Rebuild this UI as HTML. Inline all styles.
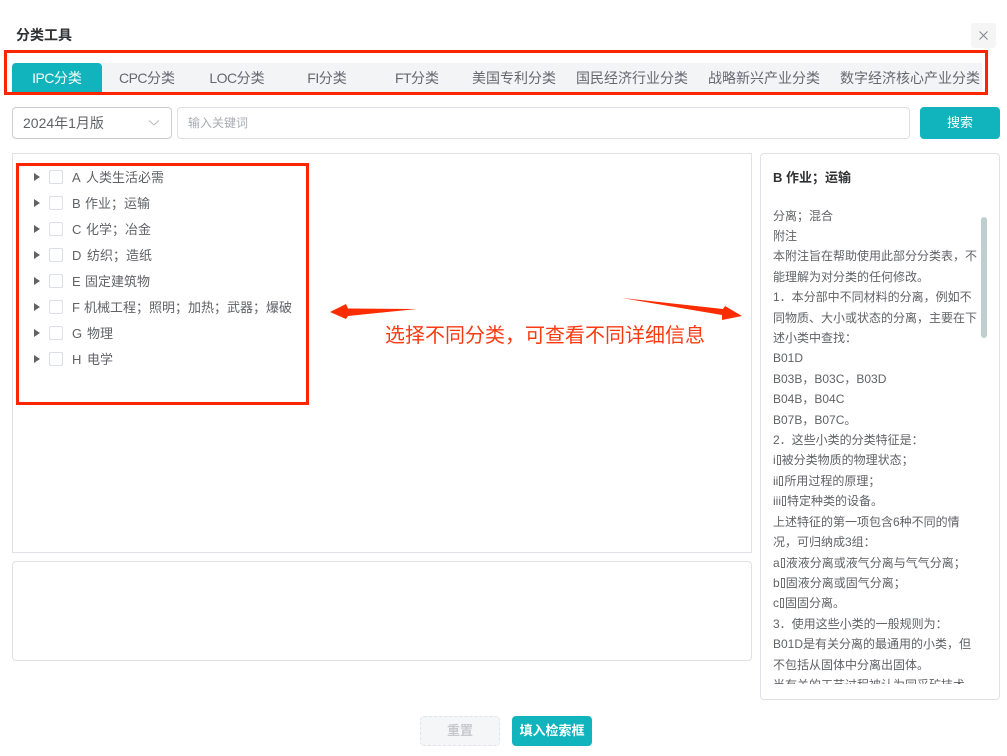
<!DOCTYPE html>
<html lang="zh-CN">
<head>
<meta charset="utf-8">
<title>分类工具</title>
<style>
html,body{margin:0;padding:0;background:#fff}
body{width:1007px;height:756px;position:relative;overflow:hidden;font-family:"Liberation Sans","Noto Sans CJK SC",sans-serif;color:#606266}
.a{position:absolute;box-sizing:border-box;white-space:nowrap}
.tabbar{left:12px;top:63px;width:970px;height:29px;background:#f3f4f6}
.active{left:12px;top:63px;width:90px;height:29px;background:#11b4bd;border-radius:4px 4px 0 0}
.tab{top:63px;height:29px;line-height:30px;font-size:14px;text-align:center;width:140px;color:#646870}
.tab i{font-style:normal;letter-spacing:-.5px}
.panel{border:1px solid #dfe1e7}
.row .arrow{position:absolute;width:0;height:0;border-left:6px solid #606266;border-top:4.5px solid transparent;border-bottom:4.5px solid transparent}
.cb{position:absolute;left:49px;width:14px;height:14px;border:1px solid #dcdfe6;border-radius:2px;box-sizing:border-box;background:#fff}
.t{position:absolute;font-size:13px;line-height:18px;white-space:nowrap;color:#606266}
.info{left:773px;top:205.6px;width:206px;height:478.4px;overflow:hidden;font-size:12px;line-height:20.4px;color:#606266;white-space:normal}
.info div{white-space:nowrap}
.x{display:inline-block;width:4px;height:10px;border:1px solid #707070;box-sizing:border-box;margin:0 1px;vertical-align:-1px}
</style>
</head>
<body>
<div class="a" style="left:16px;top:25px;font-size:14px;line-height:20px;font-weight:700;color:#303133">分类工具</div>
<div class="a" style="left:971px;top:23px;width:25px;height:25px;background:#f5f5f6;border-radius:3px">
<svg width="25" height="25" style="display:block"><path d="M8.5 8.500L16.500 16.500M16.500 8.500L8.500 16.500" stroke="#82858b" stroke-width="1" fill="none"/></svg>
</div>

<div class="a tabbar"></div>
<div class="a active"></div>
<div class="a tab" style="left:-13px;color:#fff"><i>IPC</i>分类</div>
<div class="a tab" style="left:77px"><i>CPC</i>分类</div>
<div class="a tab" style="left:167px"><i>LOC</i>分类</div>
<div class="a tab" style="left:257px"><i>FI</i>分类</div>
<div class="a tab" style="left:347px"><i>FT</i>分类</div>
<div class="a tab" style="left:444px">美国专利分类</div>
<div class="a tab" style="left:562px">国民经济行业分类</div>
<div class="a tab" style="left:694px">战略新兴产业分类</div>
<div class="a tab" style="left:840px">数字经济核心产业分类</div>
<div class="a" style="left:4px;top:50px;width:984px;height:45px;border:3px solid #fb2600"></div>

<div class="a" style="left:12px;top:107px;width:160px;height:32px;border:1px solid #c9ccd3;border-radius:4px"></div>
<div class="a" style="left:23px;top:113px;font-size:14px;line-height:20px;color:#606266">2024年1月版</div>
<svg class="a" style="left:148px;top:118px" width="12" height="10"><path d="M1 2.500L6 7L11 2.500" stroke="#b4b7bd" stroke-width="1" fill="none"/></svg>
<div class="a" style="left:177px;top:107px;width:733px;height:32px;border:1px solid #dcdfe6;border-radius:4px"></div>
<div class="a" style="left:188px;top:114px;font-size:12px;line-height:18px;color:#a8abb2">输入关键词</div>
<div class="a" style="left:920px;top:107px;width:80px;height:32px;background:#11b4bd;border-radius:4px;color:#fff;font-size:13px;line-height:31px;text-align:center">搜索</div>

<div class="a panel" style="left:12px;top:153px;width:740px;height:400px"></div>
<div class="a panel" style="left:12px;top:561px;width:740px;height:100px;border-radius:4px"></div>
<div class="a panel" style="left:760px;top:153px;width:240px;height:547px;border-radius:4px"></div>

<div class="row">
<span class="arrow" style="left:34px;top:173px"></span><span class="cb" style="top:170px"></span><span class="t" style="left:72px;top:169px">A</span><span class="t" style="left:86px;top:169px">人类生活必需</span>
<span class="arrow" style="left:34px;top:199px"></span><span class="cb" style="top:196px"></span><span class="t" style="left:72px;top:195px">B</span><span class="t" style="left:85px;top:195px">作业；运输</span>
<span class="arrow" style="left:34px;top:225px"></span><span class="cb" style="top:222px"></span><span class="t" style="left:72px;top:221px">C</span><span class="t" style="left:86px;top:221px">化学；冶金</span>
<span class="arrow" style="left:34px;top:251px"></span><span class="cb" style="top:248px"></span><span class="t" style="left:72px;top:247px">D</span><span class="t" style="left:87px;top:247px">纺织；造纸</span>
<span class="arrow" style="left:34px;top:277px"></span><span class="cb" style="top:274px"></span><span class="t" style="left:72px;top:273px">E</span><span class="t" style="left:85px;top:273px">固定建筑物</span>
<span class="arrow" style="left:34px;top:303px"></span><span class="cb" style="top:300px"></span><span class="t" style="left:72px;top:299px">F</span><span class="t" style="left:84px;top:299px">机械工程；照明；加热；武器；爆破</span>
<span class="arrow" style="left:34px;top:329px"></span><span class="cb" style="top:326px"></span><span class="t" style="left:72px;top:325px">G</span><span class="t" style="left:87px;top:325px">物理</span>
<span class="arrow" style="left:34px;top:355px"></span><span class="cb" style="top:352px"></span><span class="t" style="left:72px;top:351px">H</span><span class="t" style="left:87px;top:351px">电学</span>
</div>

<div class="a" style="left:16px;top:163px;width:293px;height:242px;border:3px solid #fb2600"></div>

<svg class="a" style="left:0;top:0" width="1007" height="756">
<polygon points="330,312 346,304 348,308.500 417,309 348,316 346,319" fill="#fb2d00"/>
<polygon points="622,298 723,309 725,306 742,316 722,320 722,315" fill="#fb2d00"/>
</svg>
<div class="a" style="left:385px;top:322px;font-size:20px;line-height:29px;color:#fb3a12">选择不同分类，可查看不同详细信息</div>

<div class="a" style="left:773px;top:169px;font-size:13px;line-height:18px;font-weight:700;color:#303133">B 作业；运输</div>
<div class="a info">
<div>分离；混合</div>
<div>附注</div>
<div>本附注旨在帮助使用此部分分类表，不</div>
<div>能理解为对分类的任何修改。</div>
<div>1．本分部中不同材料的分离，例如不</div>
<div>同物质、大小或状态的分离，主要在下</div>
<div>述小类中查找：</div>
<div>B01D</div>
<div>B03B，B03C，B03D</div>
<div>B04B，B04C</div>
<div>B07B，B07C。</div>
<div>2．这些小类的分类特征是：</div>
<div>i<span class="x"></span>被分类物质的物理状态；</div>
<div>ii<span class="x"></span>所用过程的原理；</div>
<div>iii<span class="x"></span>特定种类的设备。</div>
<div>上述特征的第一项包含6种不同的情</div>
<div>况，可归纳成3组：</div>
<div>a<span class="x"></span>液液分离或液气分离与气气分离；</div>
<div>b<span class="x"></span>固液分离或固气分离；</div>
<div>c<span class="x"></span>固固分离。</div>
<div>3．使用这些小类的一般规则为：</div>
<div>B01D是有关分离的最通用的小类，但</div>
<div>不包括从固体中分离出固体。</div>
<div>当有关的工艺过程被认为同采矿技术</div>
</div>
<div class="a" style="left:981px;top:217px;width:6px;height:121px;background:#bfcfcf;border-radius:3px"></div>

<div class="a" style="left:420px;top:716px;width:80px;height:30px;border:1px dashed #e1e3e9;border-radius:4px;background:#f5f6f8;color:#c8c9cc;font-size:13px;font-weight:700;line-height:28px;text-align:center">重置</div>
<div class="a" style="left:512px;top:716px;width:80px;height:30px;border-radius:4px;background:#11b4bd;color:#fff;font-size:13px;font-weight:700;line-height:29px;text-align:center">填入检索框</div>
</body>
</html>
